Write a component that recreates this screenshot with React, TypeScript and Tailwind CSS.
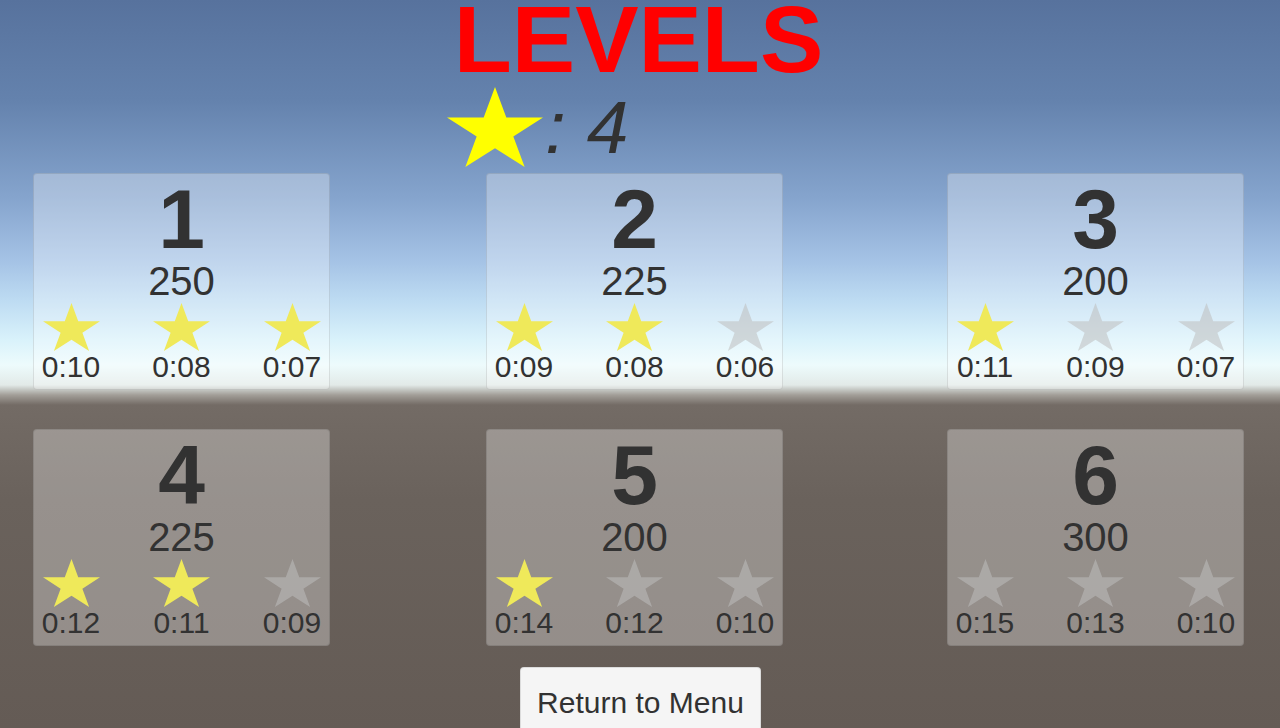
import React from 'react';

type Level = {
  id: number;
  score: number;
  stars: number;
  times: [string, string, string];
};

const LEVELS: Level[] = [
  { id: 1, score: 250, stars: 3, times: ['0:10', '0:08', '0:07'] },
  { id: 2, score: 225, stars: 2, times: ['0:09', '0:08', '0:06'] },
  { id: 3, score: 200, stars: 1, times: ['0:11', '0:09', '0:07'] },
  { id: 4, score: 225, stars: 2, times: ['0:12', '0:11', '0:09'] },
  { id: 5, score: 200, stars: 1, times: ['0:14', '0:12', '0:10'] },
  { id: 6, score: 300, stars: 0, times: ['0:15', '0:13', '0:10'] },
];

// stars the player can spend, kept apart from the per-level records
const STAR_BALANCE = 4;

const COL_OFFSET = ['ml-0', 'ml-[156px]', 'ml-[164px]'];

function Star({ className, fill }: { className: string; fill: string }) {
  return (
    <svg viewBox="0 0 100 95" preserveAspectRatio="none" className={className}>
      <polygon
        points="50,0 61.8,36.3 100,36.3 69.1,58.8 80.9,95 50,72.6 19.1,95 30.9,58.8 0,36.3 38.2,36.3"
        fill={fill}
      />
    </svg>
  );
}

function LevelCard({ level, offset }: { level: Level; offset: string }) {
  return (
    <div
      className={`${offset} w-[297px] h-[217px] shrink-0 rounded-[4px] bg-white/30 border border-black/10 flex flex-col items-center text-[#323232]`}
    >
      <div className="mt-[13px] text-[84px] leading-[64px] font-bold">{level.id}</div>
      <div className="mt-[14px] text-[40px] leading-[32px]">{level.score}</div>
      <div className="mt-[6px] w-full flex justify-between">
        {level.times.map((t, i) => (
          <div key={i} className="w-[74px] flex flex-col items-center">
            <Star
              className="w-[57px] h-[48px]"
              fill={i < level.stars ? '#efe95a' : 'rgba(190,190,190,0.55)'}
            />
            <div className="mt-[4px] text-[30px] leading-[24px] whitespace-nowrap">{t}</div>
          </div>
        ))}
      </div>
    </div>
  );
}

export default function App() {
  return (
    <div
      className="w-[1280px] h-[728px] overflow-hidden flex flex-col bg-[linear-gradient(180deg,#57729d_0px,#6482ad_100px,#86a5ce_200px,#a4c2e5_260px,#bddbf2_300px,#d9f2fb_340px,#edfbfc_365px,#e2eae8_385px,#a29e98_395px,#736b65_405px,#6a625c_500px,#645b55_728px)]"
      style={{ fontFamily: '"Liberation Sans", Arial, sans-serif' }}
    >
      <h1 className="mt-[3px] ml-[-3px] text-center text-[95px] leading-[72px] font-bold text-[#ff0000]">LEVELS</h1>

      <div className="mt-[12px] pl-[447px] flex items-start h-[80px]">
        <Star className="w-[96px] h-[80px]" fill="#ffff00" />
        <span className="ml-[2px] mt-[12px] text-[75px] leading-[56px] italic text-[#323232]">: {STAR_BALANCE}</span>
      </div>

      <div className="mt-[6px] pl-[33px] flex flex-col gap-[39px]">
        {[0, 3].map((start) => (
          <div key={start} className="flex">
            {LEVELS.slice(start, start + 3).map((l, i) => (
              <LevelCard key={l.id} level={l} offset={COL_OFFSET[i]} />
            ))}
          </div>
        ))}
      </div>

      <div className="mt-[21px] flex justify-center">
        <button className="ml-[1px] w-[241px] h-[80px] rounded-t-[4px] bg-[#f5f5f5] border border-black/10 text-[30px] text-[#323232] flex justify-center pt-[12px]">
          Return to Menu
        </button>
      </div>
    </div>
  );
}
